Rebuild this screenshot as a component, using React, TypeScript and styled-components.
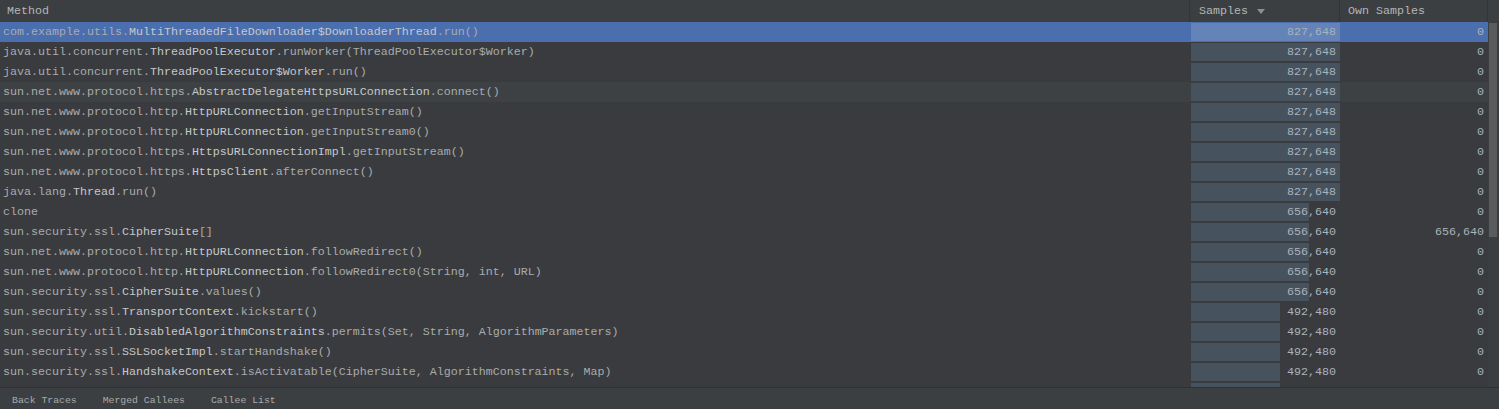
import React from 'react';
import styled, { createGlobalStyle } from 'styled-components';

const GlobalStyle = createGlobalStyle`
  html, body {
    margin: 0;
    padding: 0;
    background: #393b3e;
  }
`;

const COLS = '1190px 150px 148px 11px';
const MAX = 827648;
const BAR_MAX = 149;

type Frame = {
  pkg: string;
  cls: string;
  rest: string;
  samples: number;
  own: number;
};

const frames: Frame[] = [
  { pkg: 'com.example.utils.', cls: 'MultiThreadedFileDownloader$DownloaderThread', rest: '.run()', samples: 827648, own: 0 },
  { pkg: 'java.util.concurrent.', cls: 'ThreadPoolExecutor', rest: '.runWorker(ThreadPoolExecutor$Worker)', samples: 827648, own: 0 },
  { pkg: 'java.util.concurrent.', cls: 'ThreadPoolExecutor$Worker', rest: '.run()', samples: 827648, own: 0 },
  { pkg: 'sun.net.www.protocol.https.', cls: 'AbstractDelegateHttpsURLConnection', rest: '.connect()', samples: 827648, own: 0 },
  { pkg: 'sun.net.www.protocol.http.', cls: 'HttpURLConnection', rest: '.getInputStream()', samples: 827648, own: 0 },
  { pkg: 'sun.net.www.protocol.http.', cls: 'HttpURLConnection', rest: '.getInputStream0()', samples: 827648, own: 0 },
  { pkg: 'sun.net.www.protocol.https.', cls: 'HttpsURLConnectionImpl', rest: '.getInputStream()', samples: 827648, own: 0 },
  { pkg: 'sun.net.www.protocol.https.', cls: 'HttpsClient', rest: '.afterConnect()', samples: 827648, own: 0 },
  { pkg: 'java.lang.', cls: 'Thread', rest: '.run()', samples: 827648, own: 0 },
  { pkg: 'clone', cls: '', rest: '', samples: 656640, own: 0 },
  { pkg: 'sun.security.ssl.', cls: 'CipherSuite', rest: '[]', samples: 656640, own: 656640 },
  { pkg: 'sun.net.www.protocol.http.', cls: 'HttpURLConnection', rest: '.followRedirect()', samples: 656640, own: 0 },
  { pkg: 'sun.net.www.protocol.http.', cls: 'HttpURLConnection', rest: '.followRedirect0(String, int, URL)', samples: 656640, own: 0 },
  { pkg: 'sun.security.ssl.', cls: 'CipherSuite', rest: '.values()', samples: 656640, own: 0 },
  { pkg: 'sun.security.ssl.', cls: 'TransportContext', rest: '.kickstart()', samples: 492480, own: 0 },
  { pkg: 'sun.security.util.', cls: 'DisabledAlgorithmConstraints', rest: '.permits(Set, String, AlgorithmParameters)', samples: 492480, own: 0 },
  { pkg: 'sun.security.ssl.', cls: 'SSLSocketImpl', rest: '.startHandshake()', samples: 492480, own: 0 },
  { pkg: 'sun.security.ssl.', cls: 'HandshakeContext', rest: '.isActivatable(CipherSuite, AlgorithmConstraints, Map)', samples: 492480, own: 0 },
];

// next row is scrolled mostly out of view: only the top of its bar shows
const partialSamples = 492480;

const fmt = (n: number) => n.toLocaleString('en-US');

export default function App() {
  return (
    <>
      <GlobalStyle />
      <Root>
        <Header>
          <HeaderCell>Method</HeaderCell>
          <HeaderCell $pad={9}>
            Samples
            <SortArrow viewBox="0 0 8 5">
              <path d="M0 0h8L4 5z" fill="#8c8e90" />
            </SortArrow>
          </HeaderCell>
          <HeaderCell $pad={8}>Own Samples</HeaderCell>
          <HeaderCell />
        </Header>
        <Body>
          <Rows>
            {frames.map((f, i) => (
              <Row key={i} $selected={i === 0} $hover={i === 3}>
                <MethodCell>
                  <Pkg>{f.pkg}</Pkg>
                  {f.cls && <Cls>{f.cls}</Cls>}
                  <Pkg>{f.rest}</Pkg>
                </MethodCell>
                <NumCell>
                  <Bar $selected={i === 0} style={{ width: Math.round((f.samples / MAX) * BAR_MAX) }} />
                  <Num>{fmt(f.samples)}</Num>
                </NumCell>
                <NumCell>
                  <Num>{fmt(f.own)}</Num>
                </NumCell>
              </Row>
            ))}
            <Row>
              <MethodCell />
              <NumCell>
                <Bar style={{ width: Math.round((partialSamples / MAX) * BAR_MAX) }} />
              </NumCell>
              <NumCell />
            </Row>
          </Rows>
          <Scrollbar>
            <Thumb />
          </Scrollbar>
        </Body>
        <Footer>
          <Tab>Back Traces</Tab>
          <Tab>Merged Callees</Tab>
          <Tab>Callee List</Tab>
        </Footer>
      </Root>
    </>
  );
}

const Root = styled.div`
  display: flex;
  flex-direction: column;
  width: 1499px;
  height: 409px;
  overflow: hidden;
  background: #393b3e;
  font-family: 'Liberation Mono', 'DejaVu Sans Mono', monospace;
  font-size: 11.67px;
  line-height: 14px;
  color: #a9abad;
`;

const Header = styled.div`
  display: grid;
  grid-template-columns: ${COLS};
  height: 22px;
  flex: none;
  background: #3c3f41;
`;

const HeaderCell = styled.div<{ $pad?: number }>`
  display: flex;
  align-items: center;
  gap: 9px;
  padding-left: ${(p) => p.$pad ?? 7}px;
  color: #b4b6b8;
  border-right: 1px solid #323436;

  &:last-child {
    border-right: none;
  }
`;

const SortArrow = styled.svg`
  width: 8px;
  height: 5px;
`;

const Body = styled.div`
  flex: 1;
  display: flex;
  overflow: hidden;
`;

const Rows = styled.div`
  flex: 1;
  display: flex;
  flex-direction: column;
`;

const Row = styled.div<{ $selected?: boolean; $hover?: boolean }>`
  display: grid;
  grid-template-columns: 1190px 150px 148px;
  height: 20px;
  flex: none;
  background: ${(p) => (p.$selected ? '#4b6eaf' : p.$hover ? '#3e4144' : 'transparent')};
`;

const MethodCell = styled.div`
  display: flex;
  align-items: center;
  padding-left: 3px;
  white-space: pre;
  overflow: hidden;
`;

const Pkg = styled.span`
  color: #a9abad;
`;

const Cls = styled.span`
  color: #c6c8ca;
`;

const NumCell = styled.div`
  position: relative;
  display: flex;
  align-items: center;
  justify-content: flex-end;
  padding-right: 4px;
`;

const Bar = styled.div<{ $selected?: boolean }>`
  position: absolute;
  left: 1px;
  top: 1px;
  bottom: 1px;
  background: ${(p) => (p.$selected ? '#6483b8' : '#46525e')};
`;

const Num = styled.span`
  position: relative;
  color: #a9b3bd;
`;

const Scrollbar = styled.div`
  width: 11px;
  flex: none;
  background: #3b3e40;
  padding: 1px 2px 0 1px;
  box-sizing: border-box;
`;

const Thumb = styled.div`
  height: 214px;
  background: #595b5d;
`;

const Footer = styled.div`
  display: flex;
  align-items: flex-end;
  height: 22px;
  flex: none;
  border-top: 1px solid #2f3133;
  background: #3c3f41;
  padding: 0 0 2px 12px;
  gap: 26px;
  box-sizing: border-box;
`;

const Tab = styled.div`
  font-size: 9.8px;
  line-height: 13px;
  color: #a9abad;
`;
